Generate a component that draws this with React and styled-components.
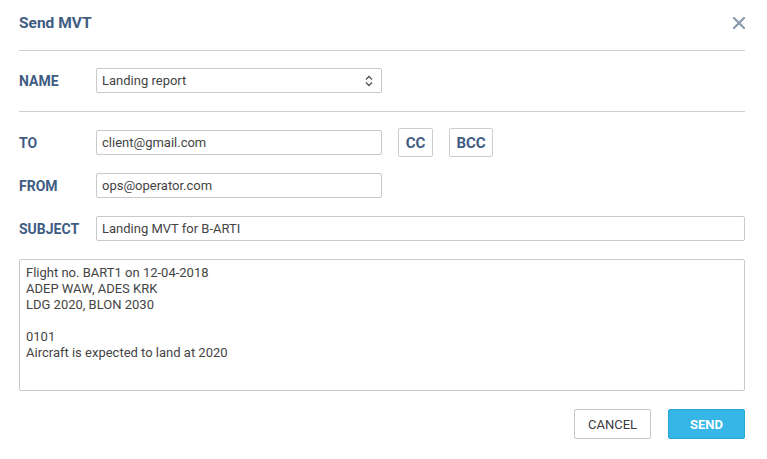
import React from "react";
import styled, { createGlobalStyle } from "styled-components";

const GlobalStyle = createGlobalStyle`
  html, body {
    margin: 0;
    padding: 0;
    background: #ffffff;
  }
  body {
    font-family: Roboto, "Liberation Sans", Arial, sans-serif;
    color: #333;
  }
  * { box-sizing: border-box; }
`;

const Modal = styled.div`
  width: 767px;
  height: 459px;
  background: #fff;
  padding: 0 22px 0 19px;
  display: flex;
  flex-direction: column;
`;

const Header = styled.div`
  height: 51px;
  display: flex;
  align-items: center;
  justify-content: space-between;
  border-bottom: 1px solid #cfcfcf;
  padding-bottom: 5px;
`;

const Title = styled.h2`
  margin: 0;
  font-size: 15.5px;
  font-weight: 700;
  color: #3f5c83;
`;

const CloseButton = styled.button`
  border: 0;
  background: transparent;
  padding: 0;
  margin-right: -1px;
  width: 14px;
  height: 14px;
  display: flex;
  align-items: center;
  justify-content: center;
  cursor: pointer;
`;

const Section = styled.div`
  display: flex;
  flex-direction: column;
  gap: ${(p) => p.$gap || 18}px;
  padding: ${(p) => p.$pad || "0"};
  border-bottom: ${(p) => (p.$divider ? "1px solid #cfcfcf" : "0")};
`;

const Row = styled.div`
  display: flex;
  align-items: center;
  height: ${(p) => p.$h || 25}px;
`;

const Label = styled.label`
  width: 77px;
  flex: none;
  font-size: 14px;
  font-weight: 700;
  color: #3f5c83;
`;

const Field = styled.div`
  height: 25px;
  width: ${(p) => (p.$full ? "auto" : "286px")};
  flex: ${(p) => (p.$full ? "1" : "none")};
  border: 1px solid #c9c9c9;
  border-radius: 2px;
  display: flex;
  align-items: center;
  justify-content: space-between;
  padding: 0 8px 0 5px;
  font-size: 13px;
  color: #444;
  background: #fff;
`;

const SmallButton = styled.button`
  height: 29px;
  width: ${(p) => p.$w}px;
  padding: 0;
  margin-left: 16px;
  border: 1px solid #cdcdcd;
  border-radius: 2px;
  background: #fff;
  font-family: inherit;
  font-size: 15px;
  font-weight: 700;
  color: #3f5c83;
  cursor: pointer;
`;

const Message = styled.div`
  height: 132px;
  border: 1px solid #c9c9c9;
  border-radius: 2px;
  padding: 5px 6px;
  font-size: 13px;
  line-height: 16px;
  color: #444;
  white-space: pre-line;
`;

const Footer = styled.div`
  display: flex;
  justify-content: flex-end;
  gap: 17px;
  margin-top: 18px;
`;

const ActionButton = styled.button`
  height: 30px;
  width: ${(p) => p.$w}px;
  border-radius: 2px;
  border: 1px solid ${(p) => (p.$primary ? "#27a6d8" : "#c6c6c6")};
  background: ${(p) => (p.$primary ? "#35b6e6" : "#fff")};
  color: ${(p) => (p.$primary ? "#fff" : "#3a3a3a")};
  font-family: inherit;
  font-size: 13px;
  font-weight: ${(p) => (p.$primary ? 700 : 400)};
  cursor: pointer;
`;

const Chevrons = () => (
  <svg width="8" height="12" viewBox="0 0 8 12" fill="none" stroke="#555" strokeWidth="1.3">
    <path d="M1 4.5 L4 1.5 L7 4.5" />
    <path d="M1 7.5 L4 10.5 L7 7.5" />
  </svg>
);

const CloseIcon = () => (
  <svg width="12" height="12" viewBox="0 0 12 12" stroke="#8898ae" strokeWidth="2.2" strokeLinecap="square">
    <path d="M1 1 L11 11 M11 1 L1 11" />
  </svg>
);

const body = `Flight no. BART1 on 12-04-2018
ADEP WAW, ADES KRK
LDG 2020, BLON 2030

0101
Aircraft is expected to land at 2020`;

export default function App() {
  return (
    <>
      <GlobalStyle />
      <Modal>
        <Header>
          <Title>Send MVT</Title>
          <CloseButton aria-label="Close">
            <CloseIcon />
          </CloseButton>
        </Header>

        <Section $divider $pad="17px 0 18px">
          <Row>
            <Label>NAME</Label>
            <Field>
              <span>Landing report</span>
              <Chevrons />
            </Field>
          </Row>
        </Section>

        <Section $pad="18px 0 0">
          <Row>
            <Label>TO</Label>
            <Field>client@gmail.com</Field>
            <SmallButton $w={35}>CC</SmallButton>
            <SmallButton $w={44}>BCC</SmallButton>
          </Row>
          <Row>
            <Label>FROM</Label>
            <Field>ops@operator.com</Field>
          </Row>
          <Row>
            <Label>SUBJECT</Label>
            <Field $full>Landing MVT for B-ARTI</Field>
          </Row>
          <Message>{body}</Message>
        </Section>

        <Footer>
          <ActionButton $w={77}>CANCEL</ActionButton>
          <ActionButton $w={77} $primary>SEND</ActionButton>
        </Footer>
      </Modal>
    </>
  );
}
